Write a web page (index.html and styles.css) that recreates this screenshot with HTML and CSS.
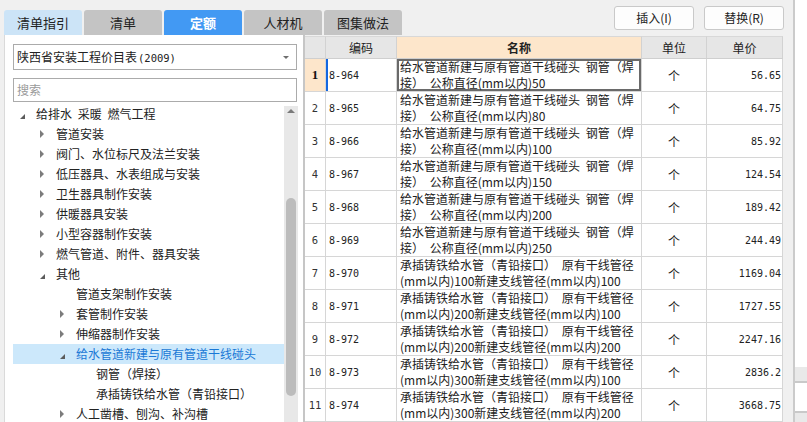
FILE: index.html
```html
<!DOCTYPE html>
<html lang="zh-CN">
<head>
<meta charset="utf-8">
<title>定额</title>
<link rel="stylesheet" href="styles.css">
</head>
<body>
<div class="app">
  <div class="main">
    <div class="topbar">
      <div class="tabs">
        <div class="tab tab-light">清单指引</div>
        <div class="tab">清单</div>
        <div class="tab tab-active">定额</div>
        <div class="tab">人材机</div>
        <div class="tab">图集做法</div>
      </div>
      <div class="buttons">
        <div class="btn">插入(I)</div>
        <div class="btn">替换(R)</div>
      </div>
    </div>
    <div class="content">
      <div class="left">
        <div class="select"><span class="select-text">陕西省安装工程价目表<span class="mono">(2009)</span></span><span class="select-arrow"></span></div>
        <div class="search">搜索</div>
        <div class="tree-wrap">
          <ul class="tree">
            <li class="node l0"><span class="tw"><span class="open"></span></span>给排水 采暖 燃气工程</li>
            <li class="node l1"><span class="tw"><span class="closed"></span></span>管道安装</li>
            <li class="node l1"><span class="tw"><span class="closed"></span></span>阀门、水位标尺及法兰安装</li>
            <li class="node l1"><span class="tw"><span class="closed"></span></span>低压器具、水表组成与安装</li>
            <li class="node l1"><span class="tw"><span class="closed"></span></span>卫生器具制作安装</li>
            <li class="node l1"><span class="tw"><span class="closed"></span></span>供暖器具安装</li>
            <li class="node l1"><span class="tw"><span class="closed"></span></span>小型容器制作安装</li>
            <li class="node l1"><span class="tw"><span class="closed"></span></span>燃气管道、附件、器具安装</li>
            <li class="node l1"><span class="tw"><span class="open"></span></span>其他</li>
            <li class="node l2"><span class="tw"></span>管道支架制作安装</li>
            <li class="node l2"><span class="tw"><span class="closed"></span></span>套管制作安装</li>
            <li class="node l2"><span class="tw"><span class="closed"></span></span>伸缩器制作安装</li>
            <li class="node l2 selected"><span class="tw"><span class="open"></span></span>给水管道新建与原有管道干线碰头</li>
            <li class="node l3"><span class="tw"></span>钢管（焊接）</li>
            <li class="node l3"><span class="tw"></span>承插铸铁给水管（青铅接口）</li>
            <li class="node l2"><span class="tw"><span class="closed"></span></span>人工凿槽、刨沟、补沟槽</li>
          </ul>
          <div class="vscroll"><span class="up"></span><div class="thumb"></div></div>
        </div>
      </div>
      <div class="divider"></div>
      <div class="grid">
        <div class="hd"></div>
        <div class="hd">编码</div>
        <div class="hd hd-name">名称</div>
        <div class="hd">单位</div>
        <div class="hd">单价</div>

        <div class="c num num-sel">1</div>
        <div class="c code code-sel">8-964</div>
        <div class="c name name-sel">给水管道新建与原有管道干线碰头 钢管（焊<br>接） 公称直径(mm以内)50</div>
        <div class="c unit">个</div>
        <div class="c price">56.65</div>

        <div class="c num">2</div>
        <div class="c code">8-965</div>
        <div class="c name">给水管道新建与原有管道干线碰头 钢管（焊<br>接） 公称直径(mm以内)80</div>
        <div class="c unit">个</div>
        <div class="c price">64.75</div>

        <div class="c num">3</div>
        <div class="c code">8-966</div>
        <div class="c name">给水管道新建与原有管道干线碰头 钢管（焊<br>接） 公称直径(mm以内)100</div>
        <div class="c unit">个</div>
        <div class="c price">85.92</div>

        <div class="c num">4</div>
        <div class="c code">8-967</div>
        <div class="c name">给水管道新建与原有管道干线碰头 钢管（焊<br>接） 公称直径(mm以内)150</div>
        <div class="c unit">个</div>
        <div class="c price">124.54</div>

        <div class="c num">5</div>
        <div class="c code">8-968</div>
        <div class="c name">给水管道新建与原有管道干线碰头 钢管（焊<br>接） 公称直径(mm以内)200</div>
        <div class="c unit">个</div>
        <div class="c price">189.42</div>

        <div class="c num">6</div>
        <div class="c code">8-969</div>
        <div class="c name">给水管道新建与原有管道干线碰头 钢管（焊<br>接） 公称直径(mm以内)250</div>
        <div class="c unit">个</div>
        <div class="c price">244.49</div>

        <div class="c num">7</div>
        <div class="c code">8-970</div>
        <div class="c name">承插铸铁给水管（青铅接口） 原有干线管径<br>(mm以内)100新建支线管径(mm以内)100</div>
        <div class="c unit">个</div>
        <div class="c price">1169.04</div>

        <div class="c num">8</div>
        <div class="c code">8-971</div>
        <div class="c name">承插铸铁给水管（青铅接口） 原有干线管径<br>(mm以内)200新建支线管径(mm以内)100</div>
        <div class="c unit">个</div>
        <div class="c price">1727.55</div>

        <div class="c num">9</div>
        <div class="c code">8-972</div>
        <div class="c name">承插铸铁给水管（青铅接口） 原有干线管径<br>(mm以内)200新建支线管径(mm以内)200</div>
        <div class="c unit">个</div>
        <div class="c price">2247.16</div>

        <div class="c num">10</div>
        <div class="c code">8-973</div>
        <div class="c name">承插铸铁给水管（青铅接口） 原有干线管径<br>(mm以内)300新建支线管径(mm以内)100</div>
        <div class="c unit">个</div>
        <div class="c price">2836.2</div>

        <div class="c num">11</div>
        <div class="c code">8-974</div>
        <div class="c name">承插铸铁给水管（青铅接口） 原有干线管径<br>(mm以内)300新建支线管径(mm以内)200</div>
        <div class="c unit">个</div>
        <div class="c price">3668.75</div>
      </div>
    </div>
  </div>
  <div class="side">
    <div class="side-top"></div>
    <div class="side-a"></div>
    <div class="side-b"></div>
    <div class="side-c"></div>
  </div>
</div>
</body>
</html>
```

FILE: styles.css
```css
* { box-sizing: border-box; }

html, body {
  margin: 0;
  padding: 0;
}

body {
  width: 807px;
  height: 422px;
  overflow: hidden;
  background: #f0f0f0;
  font-family: "Noto Sans CJK SC", "Microsoft YaHei", sans-serif;
  font-size: 12px;
  color: #222;
}

.app {
  display: flex;
  width: 807px;
  height: 422px;
}

.main {
  width: 793px;
  height: 422px;
  display: flex;
  flex-direction: column;
}

/* ---------- top bar ---------- */
.topbar {
  height: 35px;
  display: flex;
  flex: none;
}

.tabs {
  display: flex;
  gap: 2px;
  padding-left: 4px;
  padding-top: 10px;
}

.tab {
  width: 78px;
  height: 25px;
  border-radius: 3px 3px 0 0;
  background: #c4c4c4;
  font-size: 13px;
  line-height: 25px;
  text-align: center;
  color: #222;
}

.tab-light { background: #cce4f7; }

.tab-active {
  background: #4299f3;
  color: #fff;
  font-weight: bold;
}

.buttons {
  margin-left: auto;
  display: flex;
  gap: 10px;
  padding-top: 6px;
  padding-right: 9px;
}

.btn {
  width: 80px;
  height: 24px;
  background: #fdfdfd;
  border: 1px solid #c9c9c9;
  border-radius: 3px;
  text-align: center;
  line-height: 22px;
  font-size: 12px;
  color: #222;
}

/* ---------- content ---------- */
.content {
  flex: 1;
  display: flex;
  min-height: 0;
}

.left {
  width: 299px;
  margin-left: 4px;
  background: #fff;
  border-left: 1px solid #dadada;
  padding: 9px 0 0 8px;
  display: flex;
  flex-direction: column;
  overflow: hidden;
}

.select {
  width: 284px;
  height: 26px;
  border: 1px solid #ababab;
  display: flex;
  align-items: center;
  padding-left: 3px;
  font-size: 12px;
  line-height: 16px;
  flex: none;
}

.mono {
  font-family: "DejaVu Sans Mono", monospace;
  font-size: 10.5px;
  margin-left: 1px;
}

.select-text { flex: 1; }

.select-arrow {
  width: 0;
  height: 0;
  border-left: 3px solid transparent;
  border-right: 3px solid transparent;
  border-top: 3px solid #6e6e6e;
  margin-right: 7px;
}

.search {
  width: 284px;
  height: 24px;
  margin-top: 8px;
  border: 1px solid #ababab;
  padding-left: 3px;
  line-height: 22px;
  font-size: 12px;
  color: #9a9a9a;
  flex: none;
}

.tree-wrap {
  margin-top: 2px;
  display: flex;
  flex: 1;
  min-height: 0;
}

.tree {
  list-style: none;
  margin: 0;
  padding: 0;
  width: 271px;
}

.node {
  height: 20px;
  display: flex;
  align-items: center;
  white-space: pre;
  font-size: 12px;
  line-height: 20px;
  word-spacing: 3px;
  color: #222;
}

.l0 { padding-left: 4px; }
.l1 { padding-left: 24px; }
.l2 { padding-left: 44px; }
.l3 { padding-left: 64px; }

.selected {
  background: #cce8fb;
  color: #1a78d6;
}

.tw {
  width: 19px;
  height: 20px;
  flex: none;
  display: flex;
  align-items: center;
}

.closed {
  width: 0;
  height: 0;
  margin-left: 3px;
  border-top: 4px solid transparent;
  border-bottom: 4px solid transparent;
  border-left: 4px solid #7c7c7c;
}

.open {
  width: 0;
  height: 0;
  margin-left: 3px;
  margin-top: 4px;
  border-left: 5px solid transparent;
  border-bottom: 5px solid #5c5c5c;
}

.vscroll {
  width: 14px;
  margin-top: 2px;
  background: #e8e8e8;
  display: flex;
  flex-direction: column;
  align-items: center;
}

.up {
  margin-top: 3px;
  width: 0;
  height: 0;
  border-left: 4px solid transparent;
  border-right: 4px solid transparent;
  border-bottom: 4px solid #7a7a7a;
}

.thumb {
  width: 10px;
  height: 198px;
  margin-top: 85px;
  border-radius: 5px;
  background: #bcbcbc;
}

.divider {
  width: 2px;
  background: #c6c6c6;
  flex: none;
}

/* ---------- grid ---------- */
.grid {
  width: 478px;
  margin-top: 1px;
  display: grid;
  grid-template-columns: 21px 71px 245px 65px 76px;
  grid-template-rows: 23px repeat(11, 33px);
  background: #fff;
  overflow: hidden;
  align-content: start;
}

.hd {
  background: #e6e6e6;
  border-top: 1px solid #d8d8d8;
  border-right: 1px solid #d2d2d2;
  border-bottom: 1px solid #cfcfcf;
  display: flex;
  align-items: center;
  justify-content: center;
  font-size: 12px;
  color: #222;
}

.hd-name {
  background: #fde6cb;
  font-weight: bold;
}

.c {
  border-right: 1px solid #d6d6d6;
  border-bottom: 1px solid #d6d6d6;
  display: flex;
  align-items: center;
  overflow: hidden;
  white-space: nowrap;
}

.num {
  justify-content: center;
  font-family: "DejaVu Sans Mono", monospace;
  font-size: 10.5px;
  color: #333;
}

.num-sel {
  background: #fde6cb;
  font-family: "Liberation Serif", serif;
  font-weight: bold;
  font-size: 13px;
  color: #111;
}

.code {
  padding-left: 3px;
  font-family: "DejaVu Sans Mono", monospace;
  font-size: 10px;
  color: #222;
}

.code-sel {
  box-shadow: inset 2px 0 0 #1467e0;
}

.name {
  padding-left: 3px;
  font-size: 12px;
  line-height: 16px;
  word-spacing: 3px;
  color: #222;
}

.name-sel {
  box-shadow: inset 0 0 0 2px #6a6a6a;
}

.unit {
  justify-content: center;
  font-size: 12px;
}

.price {
  justify-content: flex-end;
  padding-right: 1px;
  font-family: "DejaVu Sans Mono", monospace;
  font-size: 10px;
  color: #222;
}

/* ---------- right sliver ---------- */
.side {
  width: 14px;
  height: 422px;
  border-left: 2px solid #cbcbcb;
  background: #fff;
  display: flex;
  flex-direction: column;
}

.side-top { height: 367px; }
.side-a { height: 16px; background: #e9e9e9; border-bottom: 2px solid #c9c9c9; }
.side-b { height: 30px; background: #fff; border-bottom: 2px solid #c9c9c9; }
.side-c { flex: 1; background: #e9e9e9; }
```
